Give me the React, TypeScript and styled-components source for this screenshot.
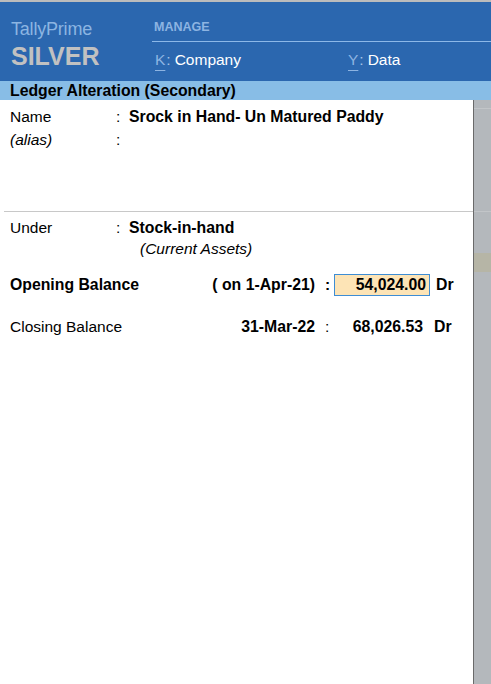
import React from "react";
import styled, { createGlobalStyle } from "styled-components";

const GlobalStyle = createGlobalStyle`
  html, body {
    margin: 0;
    padding: 0;
    background: #ffffff;
  }
  body {
    font-family: "Liberation Sans", Arial, sans-serif;
    color: #000000;
  }
`;

const Page = styled.div`
  width: 491px;
  height: 684px;
  display: flex;
  flex-direction: column;
  overflow: hidden;
`;

const TopStrip = styled.div`
  height: 2px;
  background: #bcbcbc;
`;

const Header = styled.header`
  height: 79px;
  background: #2b67af;
  display: flex;
`;

const Brand = styled.div`
  flex: 0 0 141px;
  padding: 17px 0 0 11px;
  display: flex;
  flex-direction: column;
`;

const Product = styled.div`
  font-size: 18px;
  line-height: 20px;
  color: #8cb5e2;
  letter-spacing: -0.2px;
`;

const Edition = styled.div`
  margin-top: 3px;
  font-size: 25px;
  line-height: 28px;
  font-weight: bold;
  color: #c1c1c1;
`;

const Menu = styled.nav`
  flex: 1;
  min-width: 0;
  display: flex;
  flex-direction: column;
`;

const MenuHead = styled.div`
  height: 21px;
  padding: 18px 0 0 2px;
  border-bottom: 1px solid #8cb8e8;
  font-size: 12.5px;
  line-height: 14px;
  font-weight: bold;
  color: #8db4e2;
`;

const MenuItems = styled.div`
  display: grid;
  grid-template-columns: 193px 1fr;
  padding: 9px 0 0 3px;
`;

const MenuItem = styled.div`
  font-size: 15.5px;
  line-height: 18px;
  color: #ffffff;
  white-space: nowrap;
`;

const Key = styled.span`
  color: #8db4e2;
  text-decoration: underline;
  text-decoration-thickness: 1px;
  text-underline-offset: 5px;
`;

const KeyColon = styled.span`
  color: #a9c4e6;
  margin: 0 4px 0 1px;
`;

const TitleBar = styled.div`
  height: 19px;
  background: #88bde6;
  padding-left: 10px;
  font-size: 15.8px;
  line-height: 19px;
  font-weight: bold;
`;

const Body = styled.div`
  flex: 1;
  display: flex;
`;

const Main = styled.main`
  flex: 1;
  display: flex;
  flex-direction: column;
`;

const Section = styled.section<{ $height?: number; $divider?: boolean }>`
  margin: 0 0 0 4px;
  padding-top: 5px;
  height: ${(p) => (p.$height ? `${p.$height}px` : "auto")};
  box-sizing: border-box;
  border-bottom: ${(p) => (p.$divider ? "1px solid #c8c8c8" : "none")};
`;

const FieldRow = styled.div<{ $lh: number }>`
  display: grid;
  grid-template-columns: 106px 13px 1fr;
  padding-left: 6px;
  font-size: 15.5px;
  line-height: ${(p) => p.$lh}px;
`;

const Label = styled.span<{ $italic?: boolean }>`
  font-style: ${(p) => (p.$italic ? "italic" : "normal")};
`;

const Colon = styled.span``;

const Value = styled.span`
  font-size: 15.8px;
  font-weight: bold;
`;

const SubValue = styled.div`
  padding-left: 136px;
  font-size: 15.5px;
  line-height: 21px;
  font-style: italic;
`;

const BalanceRow = styled.div<{ $top: number; $bold?: boolean }>`
  display: grid;
  grid-template-columns: 150px 155px 19px 96px auto;
  margin-top: ${(p) => p.$top}px;
  padding-left: 10px;
  height: 22px;
  font-size: 15.5px;
  line-height: 22px;
  & > span:first-child {
    font-weight: ${(p) => (p.$bold ? "bold" : "normal")};
    font-size: ${(p) => (p.$bold ? "15.8px" : "15.5px")};
  }
`;

const DateCell = styled.span`
  text-align: right;
  font-weight: bold;
  font-size: 15.8px;
  white-space: nowrap;
`;

const BalColon = styled.span<{ $bold?: boolean }>`
  padding-left: 10px;
  font-weight: ${(p) => (p.$bold ? "bold" : "normal")};
`;

const Amount = styled.span<{ $edit?: boolean }>`
  box-sizing: border-box;
  text-align: right;
  font-weight: bold;
  font-size: 15.8px;
  padding-right: ${(p) => (p.$edit ? "3px" : "6px")};
  background: ${(p) => (p.$edit ? "#fde4b6" : "transparent")};
  border: 1px solid ${(p) => (p.$edit ? "#3e8dd4" : "transparent")};
  line-height: 20px;
`;

const Side = styled.span<{ $gap: number }>`
  padding-left: ${(p) => p.$gap}px;
  font-weight: bold;
  font-size: 15.8px;
`;

const Gutter = styled.aside`
  width: 17px;
  background: #b4b8bc;
  border-left: 1px solid #6a6a6a;
  display: flex;
  flex-direction: column;
`;

const GutterCell = styled.div<{ $h: number; $line?: boolean; $tone?: string }>`
  height: ${(p) => p.$h}px;
  background: ${(p) => p.$tone || "transparent"};
  border-bottom: ${(p) => (p.$line ? "1px solid #c2c5c8" : "none")};
`;

export default function App() {
  return (
    <>
      <GlobalStyle />
      <Page>
        <TopStrip />
        <Header>
          <Brand>
            <Product>TallyPrime</Product>
            <Edition>SILVER</Edition>
          </Brand>
          <Menu>
            <MenuHead>MANAGE</MenuHead>
            <MenuItems>
              <MenuItem>
                <Key>K</Key>
                <KeyColon>:</KeyColon>Company
              </MenuItem>
              <MenuItem>
                <Key>Y</Key>
                <KeyColon>:</KeyColon>Data
              </MenuItem>
            </MenuItems>
          </Menu>
        </Header>
        <TitleBar>Ledger Alteration (Secondary)</TitleBar>
        <Body>
          <Main>
            <Section $height={112} $divider>
              <FieldRow $lh={23}>
                <Label>Name</Label>
                <Colon>:</Colon>
                <Value>Srock in Hand- Un Matured Paddy</Value>
              </FieldRow>
              <FieldRow $lh={23}>
                <Label $italic>(alias)</Label>
                <Colon>:</Colon>
                <span />
              </FieldRow>
            </Section>
            <Section>
              <FieldRow $lh={21}>
                <Label>Under</Label>
                <Colon>:</Colon>
                <Value>Stock-in-hand</Value>
              </FieldRow>
              <SubValue>(Current Assets)</SubValue>
            </Section>
            <BalanceRow $top={15} $bold>
              <span>Opening Balance</span>
              <DateCell>( on 1-Apr-21)</DateCell>
              <BalColon $bold>:</BalColon>
              <Amount $edit>54,024.00</Amount>
              <Side $gap={6}>Dr</Side>
            </BalanceRow>
            <BalanceRow $top={20}>
              <span>Closing Balance</span>
              <DateCell>31-Mar-22</DateCell>
              <BalColon>:</BalColon>
              <Amount>68,026.53</Amount>
              <Side $gap={4}>Dr</Side>
            </BalanceRow>
          </Main>
          <Gutter>
            <GutterCell $h={8} $line />
            <GutterCell $h={102} $line />
            <GutterCell $h={41} />
            <GutterCell $h={19} $tone="#b6b5a6" />
          </Gutter>
        </Body>
      </Page>
    </>
  );
}
